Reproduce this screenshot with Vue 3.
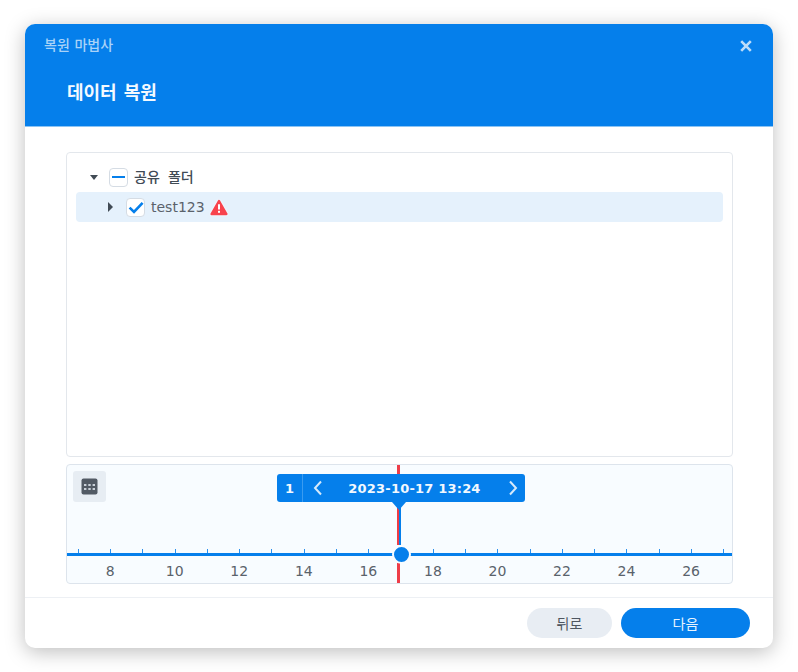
<template>
  <div class="page">
    <section class="dialog">
      <header class="head">
        <div class="top">
          <span class="wizard">복원 마법사</span>
          <svg class="close" width="12" height="12" viewBox="0 0 12 12"><path d="M1.2 1.2 10.8 10.8M10.8 1.2 1.2 10.8" stroke="#bcdcf9" stroke-width="2.6" fill="none"/></svg>
        </div>
        <h1>데이터 복원</h1>
      </header>
      <main class="body">
        <div class="tree">
          <div class="row root">
            <i class="caret down"></i>
            <span class="check"><b class="dash"></b></span>
            <span class="kr">공유 폴더</span>
          </div>
          <div class="row child">
            <i class="caret right"></i>
            <span class="check small">
              <svg width="16" height="13" viewBox="0 0 16 13"><path d="M1.6 6.6 6 11 14.6 1.8" stroke="#057feb" stroke-width="2.6" fill="none"/></svg>
            </span>
            <span class="name">test123</span>
            <svg class="warn" width="18" height="17" viewBox="0 0 18 17">
              <path d="M9 2 16.4 15H1.6Z" fill="#f8434d" stroke="#f8434d" stroke-width="2.4" stroke-linejoin="round"/>
              <path d="M9 5.2V10.4" stroke="#fff" stroke-width="2" fill="none"/>
              <rect x="8" y="11.8" width="2" height="2" fill="#fff"/>
            </svg>
          </div>
        </div>
        <div class="timeline">
          <button class="cal">
            <svg width="17" height="17" viewBox="0 0 17 17">
              <rect x="0.5" y="0.5" width="16" height="16" rx="2" fill="#525a64"/>
              <g fill="#c9d0d8">
                <rect x="3" y="6" width="2.4" height="2"/><rect x="7.3" y="6" width="2.4" height="2"/><rect x="11.6" y="6" width="2.4" height="2"/>
                <rect x="3" y="10" width="2.4" height="2"/><rect x="7.3" y="10" width="2.4" height="2"/><rect x="11.6" y="10" width="2.4" height="2"/>
              </g>
            </svg>
          </button>
          <div class="red top-red"></div>
          <div class="red mid-red"></div>
          <div class="red low-red"></div>
          <div class="blue-line"></div>
          <div class="pop">
            <span class="count">1</span>
            <span class="nav">
              <svg width="10" height="16" viewBox="0 0 10 16"><path d="M8 1.5 2 8l6 6.5" stroke="#d5e9fb" stroke-width="2" fill="none"/></svg>
              <span class="date">2023-10-17 13:24</span>
              <svg width="10" height="16" viewBox="0 0 10 16"><path d="M2 1.5 8 8l-6 6.5" stroke="#d5e9fb" stroke-width="2" fill="none"/></svg>
            </span>
            <i class="arrow"></i>
          </div>
          <div class="axis"></div>
          <i v-for="t in ticks" :key="t" class="tick" :style="{ left: t + 'px' }"></i>
          <span v-for="l in labels" :key="l.v" class="label" :style="{ left: l.x + 'px' }">{{ l.v }}</span>
          <div class="knob"></div>
        </div>
      </main>
      <footer class="foot">
        <button class="btn back">뒤로</button>
        <button class="btn next">다음</button>
      </footer>
    </section>
  </div>
</template>

<script setup>
const step = 32.27
const x = (n) => 43.2 + (n - 8) * step
const ticks = Array.from({ length: 21 }, (_, i) => Math.round(x(7 + i) - 0.2)).filter((t) => t !== 334)
const labels = [8, 10, 12, 14, 16, 18, 20, 22, 24, 26].map((v) => ({ v, x: x(v) }))
</script>

<style>
html, body { margin: 0; background: #fff; }
</style>

<style scoped>
.page {
  width: 798px;
  height: 672px;
  padding: 24px 25px;
  box-sizing: border-box;
  font-family: "Noto Sans CJK KR", "Noto Sans", sans-serif;
  overflow: hidden;
}
.dialog {
  width: 748px;
  height: 624px;
  background: #fff;
  border-radius: 10px;
  box-shadow: 0 4px 20px rgba(0, 0, 0, 0.26);
  display: flex;
  flex-direction: column;
  overflow: hidden;
}
.head {
  height: 103px;
  box-sizing: border-box;
  background: #057feb;
  border-bottom: 1px solid #8cc4f4;
  color: #fff;
  flex: none;
}
.top {
  height: 42px;
  display: flex;
  align-items: center;
  justify-content: space-between;
  padding: 0 21px 0 19px;
}
.wizard {
  font-size: 14px;
  font-weight: 500;
  word-spacing: 1.5px;
  color: #a9d3f8;
  line-height: 42px;
  margin-top: -2px;
}
.close { display: block; margin-top: 1px; }
h1 {
  margin: 0;
  padding: 0 0 0 42px;
  font-size: 18px;
  font-weight: 700;
  word-spacing: 3px;
  line-height: 50px;
  color: #f4faff;
}
.body {
  flex: 1;
  padding: 25px 40px 14px 41px;
  display: flex;
  flex-direction: column;
  gap: 7px;
  border-bottom: 1px solid #edf0f4;
  min-height: 0;
}
.tree {
  height: 305px;
  box-sizing: border-box;
  border: 1px solid #e3e7ec;
  border-radius: 4px;
  padding: 9px 9px 0 9px;
  flex: none;
}
.row {
  height: 30px;
  display: flex;
  align-items: center;
  color: #414b55;
  font-size: 14px;
  border-radius: 4px;
}
.root { padding-left: 14px; }
.child { padding-left: 32px; background: #e5f1fc; }
.caret { display: block; width: 0; height: 0; border-style: solid; border-color: transparent; }
.caret.down { border-width: 5px 4.5px 0; border-top-color: #414b55; margin-right: 11px; }
.caret.right { border-width: 5px 0 5px 5px; border-left-color: #414b55; margin-right: 13px; }
.check {
  width: 19px;
  height: 19px;
  box-sizing: border-box;
  border: 1px solid #d5dce4;
  border-radius: 4px;
  background: #fff;
  display: flex;
  align-items: center;
  justify-content: center;
  flex: none;
}
.dash { display: block; width: 13px; height: 2.4px; background: #057feb; }
.kr { margin-left: 6px; margin-top: -2px; color: #414b55; font-weight: 500; word-spacing: 5px; }
.name {
  margin-left: 6px;
  font-family: "DejaVu Sans", sans-serif;
  font-size: 14px;
  color: #5a626b;
}
.warn { margin-left: 5px; filter: drop-shadow(0 0 1px #fff); }
.timeline {
  position: relative;
  height: 120px;
  flex: none;
  box-sizing: border-box;
  border: 1px solid #dde4ec;
  border-radius: 4px;
  background: #f8fcff;
  overflow: hidden;
}
.cal {
  position: absolute;
  left: 6px;
  top: 6px;
  width: 33px;
  height: 31px;
  padding: 0;
  border: 0;
  border-radius: 3px;
  background: #e7edf3;
  display: flex;
  align-items: center;
  justify-content: center;
}
.red, .blue-line { position: absolute; }
.red { left: 330px; width: 3px; background: #ee3d48; }
.top-red { top: 0; height: 10px; }
.mid-red { top: 36px; height: 44px; width: 2px; }
.low-red { top: 98px; height: 22px; }
.blue-line { left: 332px; top: 38px; height: 42px; width: 2px; background: #057feb; }
.pop {
  position: absolute;
  left: 210px;
  top: 9px;
  width: 248px;
  height: 28px;
  border-radius: 3px;
  background: #057feb;
  display: flex;
  color: #f2f8fe;
  font-family: "DejaVu Sans", sans-serif;
  font-weight: 700;
  font-size: 13px;
}
.count {
  width: 25px;
  flex: none;
  border-right: 1px solid #3a9bf0;
  display: flex;
  align-items: center;
  justify-content: center;
}
.nav {
  flex: 1;
  display: flex;
  align-items: center;
  justify-content: space-between;
  padding: 0 7px 0 10px;
}
.date { white-space: nowrap; letter-spacing: 0.2px; margin-left: -2px; }
.arrow {
  position: absolute;
  left: 115px;
  top: 28px;
  width: 0;
  height: 0;
  border-style: solid;
  border-width: 8px 7px 0;
  border-color: #057feb transparent transparent;
}
.axis {
  position: absolute;
  left: 0;
  right: 0;
  top: 88px;
  height: 3px;
  background: #057feb;
}
.tick {
  position: absolute;
  top: 84px;
  width: 1px;
  height: 4px;
  background: #2a90ee;
}
.label {
  position: absolute;
  top: 97px;
  transform: translateX(-50%);
  font-family: "DejaVu Sans", sans-serif;
  font-size: 14px;
  line-height: 18px;
  color: #5a626b;
}
.knob {
  position: absolute;
  left: 324.5px;
  top: 80px;
  width: 15px;
  height: 15px;
  border-radius: 50%;
  background: #057feb;
  border: 2px solid #f8fcff;
}
.foot {
  height: 50px;
  flex: none;
  box-sizing: border-box;
  display: flex;
  justify-content: flex-end;
  gap: 9px;
  padding: 10px 23px 10px 0;
}
.btn {
  height: 30px;
  padding: 0;
  border: 0;
  border-radius: 15px;
  font-family: "Noto Sans CJK KR", sans-serif;
  font-size: 14px;
  line-height: 30px;
}
.back { width: 85px; background: #e8edf3; color: #4e5660; }
.next { width: 129px; background: #057feb; color: #eaf4fe; }
</style>
